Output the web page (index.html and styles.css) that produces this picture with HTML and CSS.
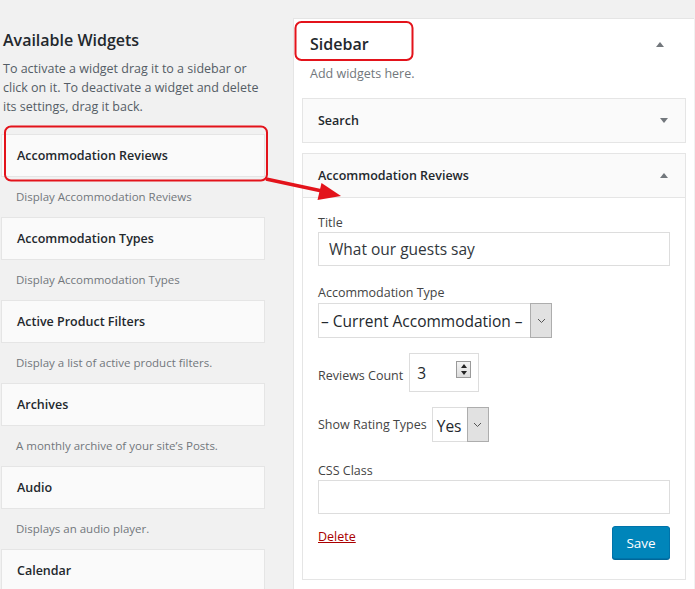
FILE: index.html
```html
<!DOCTYPE html>
<html lang="en">
<head>
    <meta charset="UTF-8">
    <meta name="viewport" content="width=device-width, initial-scale=1.0">
    <title>Widgets</title>
    <link rel="stylesheet" href="styles.css">
</head>
<body>
    <div id="main">
        <div class="available">
            <h2 class="available-title">Available Widgets</h2>
            <p class="available-desc">To activate a widget drag it to a sidebar or click on it. To deactivate a widget and delete its settings, drag it back.</p>

            <div class="widget-list">
                <div class="widget-box">Accommodation Reviews</div>
                <div class="widget-desc">Display Accommodation Reviews</div>
                <div class="widget-box">Accommodation Types</div>
                <div class="widget-desc">Display Accommodation Types</div>
                <div class="widget-box">Active Product Filters</div>
                <div class="widget-desc">Display a list of active product filters.</div>
                <div class="widget-box">Archives</div>
                <div class="widget-desc">A monthly archive of your site’s Posts.</div>
                <div class="widget-box">Audio</div>
                <div class="widget-desc">Displays an audio player.</div>
                <div class="widget-box">Calendar</div>
            </div>
        </div>

        <div class="sidebar">
            <div class="sidebar-head">
                <h2 class="sidebar-title">Sidebar</h2>
                <span class="arrow up"></span>
            </div>
            <p class="sidebar-desc">Add widgets here.</p>

            <div class="sb-widget">
                <div class="sb-widget-head">
                    <span>Search</span>
                    <span class="arrow down"></span>
                </div>
            </div>

            <div class="sb-widget">
                <div class="sb-widget-head">
                    <span>Accommodation Reviews</span>
                    <span class="arrow up"></span>
                </div>
                <form class="sb-widget-body">
                    <label class="field-label">Title</label>
                    <input class="text-input" type="text" value="What our guests say">

                    <label class="field-label type-label">Accommodation Type</label>
                    <div class="select select-wide">
                        <span class="select-value">– Current Accommodation –</span>
                        <span class="select-btn">
                            <svg width="9" height="6" viewBox="0 0 9 6"><path d="M1 1l3.5 3.5L8 1" fill="none" stroke="#555" stroke-width="1"/></svg>
                        </span>
                    </div>

                    <div class="inline-row count-row">
                        <label>Reviews Count</label>
                        <div class="number">
                            <span>3</span>
                            <span class="spinner"><i class="sp-up"></i><i class="sp-down"></i></span>
                        </div>
                    </div>

                    <div class="inline-row rating-row">
                        <label>Show Rating Types</label>
                        <div class="select">
                            <span class="select-value">Yes</span>
                            <span class="select-btn">
                                <svg width="9" height="6" viewBox="0 0 9 6"><path d="M1 1l3.5 3.5L8 1" fill="none" stroke="#555" stroke-width="1"/></svg>
                            </span>
                        </div>
                    </div>

                    <label class="field-label css-label">CSS Class</label>
                    <input class="text-input" type="text">

                    <div class="actions">
                        <a class="delete" href="#">Delete</a>
                        <button class="save" type="button">Save</button>
                    </div>
                </form>
            </div>
        </div>
    </div>

    <!-- red markup drawn on top of the screen -->
    <svg class="marks" width="695" height="589" viewBox="0 0 695 589">
        <rect x="5" y="126.5" width="262" height="54" rx="6" fill="none" stroke="#e3131b" stroke-width="2"/>
        <rect x="295.5" y="22" width="117" height="38" rx="6" fill="none" stroke="#e3131b" stroke-width="2"/>
        <line x1="266" y1="179" x2="322" y2="191" stroke="#e3131b" stroke-width="3.5"/>
        <polygon points="341,196 317.5,200 321.5,183" fill="#e3131b"/>
    </svg>
</body>
</html>
```

FILE: styles.css
```css
body{
    margin: 0;
    background: #f1f1f1;
    font-family: "Open Sans", "Noto Sans", sans-serif;
    color: #32373c;
    font-size: 13px;
    overflow: hidden;
    width: 695px;
    height: 589px;
    position: relative;
}
#main{
    display: flex;
    align-items: flex-start;
}

/* left column */
.available{
    width: 264px;
    padding-left: 1px;
    flex: none;
}
.available-title{
    margin: 29px 0 0 2px;
    font-size: 16px;
    font-weight: 600;
    color: #23282d;
    line-height: 22px;
}
.available-desc{
    margin: 8px 0 0 2px;
    font-size: 12.5px;
    line-height: 19px;
    color: #555d66;
}
.widget-list{
    margin-top: 18px;
}
.widget-box{
    background: #fafafa;
    border: 1px solid #e5e5e5;
    padding: 11px 15px;
    line-height: 19px;
    font-weight: 600;
    font-size: 12.5px;
    color: #23282d;
}
.widget-desc{
    padding: 10px 15px;
    line-height: 20px;
    font-size: 11.5px;
    color: #72777c;
}

/* right column */
.sidebar{
    margin-left: 28px;
    margin-top: 18px;
    width: 384px;
    background: #fff;
    border: 1px solid #e5e5e5;
    border-right: none;
    padding: 0 8px 40px 8px;
    flex: none;
}
.sidebar-head{
    display: flex;
    justify-content: space-between;
    align-items: center;
    height: 50px;
    padding: 0 22px 0 8px;
}
.sidebar-title{
    margin: 0;
    font-size: 16px;
    font-weight: 600;
    color: #23282d;
}
.sidebar-desc{
    margin: -4px 0 0 8px;
    color: #72777c;
    font-size: 12.5px;
    line-height: 17px;
}
.arrow{
    width: 0;
    height: 0;
    border-left: 4px solid transparent;
    border-right: 4px solid transparent;
}
.arrow.up{
    border-bottom: 5px solid #72777c;
}
.arrow.down{
    border-top: 5px solid #72777c;
}
.sb-widget{
    border: 1px solid #e5e5e5;
    margin-top: 10px;
    background: #fff;
}
.sidebar-desc + .sb-widget{
    margin-top: 16px;
}
.sb-widget-head{
    background: #fafafa;
    height: 43px;
    display: flex;
    justify-content: space-between;
    align-items: center;
    padding: 0 17px 0 15px;
    font-weight: 600;
    font-size: 12.5px;
    color: #23282d;
}
.sb-widget-body{
    border-top: 1px solid #e5e5e5;
    padding: 16px 15px 20px 15px;
    display: flex;
    flex-direction: column;
    align-items: flex-start;
}
.field-label{
    font-size: 12.5px;
    line-height: 17px;
    color: #444;
}
.text-input{
    box-sizing: border-box;
    width: 100%;
    height: 34px;
    margin: 1px 0 0 0;
    border: 1px solid #ddd;
    padding: 0 10px;
    font-family: inherit;
    font-size: 15.5px;
    color: #32373c;
    outline: none;
}
.type-label{
    margin-top: 18px;
}
.css-label{
    margin-top: 20px;
}
.select{
    display: flex;
    border: 1px solid #ddd;
    height: 35px;
    box-sizing: border-box;
    margin-top: 2px;
}
.select-wide{
    width: 234px;
}
.select-value{
    flex: 1;
    display: flex;
    align-items: center;
    padding: 0 4px 0 2px;
    font-size: 15.5px;
    color: #23282d;
    white-space: nowrap;
}
.select-btn{
    width: 20px;
    background: #e1e1e1;
    border: 1px solid #adadad;
    margin: -1px -1px -1px 0;
    display: flex;
    align-items: center;
    justify-content: center;
}
.inline-row{
    display: flex;
    align-items: center;
    font-size: 12.5px;
    color: #444;
}
.count-row{
    margin-top: 15px;
}
.count-row label{
    margin-right: 6px;
    padding-top: 5px;
}
.number{
    width: 70px;
    height: 39px;
    box-sizing: border-box;
    border: 1px solid #ddd;
    display: flex;
    align-items: center;
    justify-content: space-between;
    padding: 0 7px 0 7px;
    font-size: 15.5px;
    color: #23282d;
}
.spinner{
    width: 13px;
    height: 15px;
    border: 1px solid #9a9a9a;
    background: linear-gradient(#f4f4f4, #dcdcdc);
    display: flex;
    flex-direction: column;
    align-items: center;
    justify-content: space-around;
    margin-top: -6px;
}
.sp-up, .sp-down{
    width: 0;
    height: 0;
    border-left: 3px solid transparent;
    border-right: 3px solid transparent;
}
.sp-up{
    border-bottom: 4px solid #222;
}
.sp-down{
    border-top: 4px solid #222;
}
.rating-row{
    margin-top: 15px;
}
.rating-row label{
    margin-right: 5px;
}
.rating-row .select{
    width: 57px;
    margin-top: 0;
}
.rating-row .select-value{
    padding-left: 4px;
    padding-top: 3px;
}
.actions{
    width: 100%;
    display: flex;
    justify-content: space-between;
    align-items: flex-start;
    margin-top: 12px;
}
.delete{
    color: #a00;
    font-size: 12.5px;
    margin-top: 2px;
}
.save{
    background: #0085ba;
    border: 1px solid #0073aa;
    border-radius: 3px;
    box-shadow: 0 1px 0 #006799;
    color: #fff;
    font-family: inherit;
    font-size: 13.5px;
    height: 33px;
    width: 58px;
    padding: 0;
}

/* annotation layer */
.marks{
    position: absolute;
    left: 0;
    top: 0;
    pointer-events: none;
}
```
